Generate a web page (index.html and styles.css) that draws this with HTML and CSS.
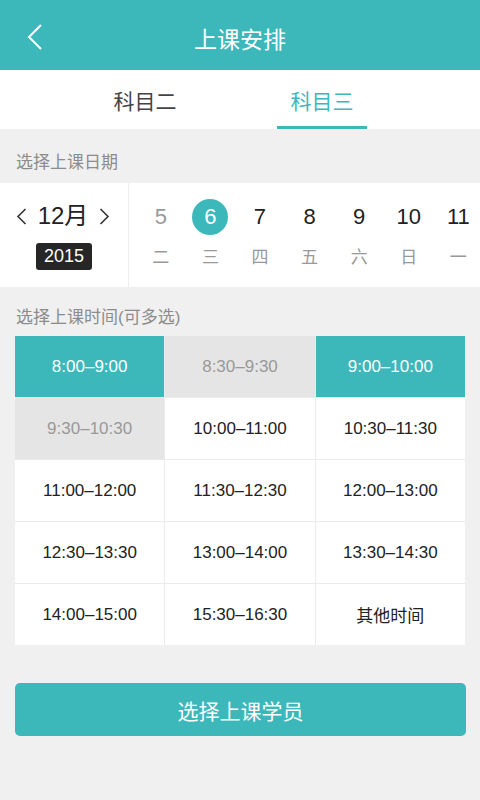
FILE: index.html
```html
<!DOCTYPE html>
<html lang="zh-CN">
<head>
<meta charset="utf-8">
<title>上课安排</title>
<link rel="stylesheet" href="styles.css">
</head>
<body>
<div class="app">
  <header class="topbar">
    <div class="back">
      <svg width="16" height="26" viewBox="0 0 16 26"><polyline points="14,1 2,13 14,25" fill="none" stroke="#fff" stroke-width="2"/></svg>
    </div>
    <div class="title">上课安排</div>
    <div class="spacer"></div>
  </header>

  <nav class="tabs">
    <div class="tab">科目二</div>
    <div class="tab active">科目三</div>
  </nav>

  <div class="label label-date">选择上课日期</div>

  <section class="daterow">
    <div class="monthpane">
      <div class="month">
        <svg width="11" height="17" viewBox="0 0 11 17"><polyline points="9.5,1 2,8.5 9.5,16" fill="none" stroke="#333" stroke-width="1.6"/></svg>
        <span class="month-text">12月</span>
        <svg width="11" height="17" viewBox="0 0 11 17"><polyline points="1.5,1 9,8.5 1.5,16" fill="none" stroke="#333" stroke-width="1.6"/></svg>
      </div>
      <div class="year">2015</div>
    </div>
    <div class="days">
      <div class="day past"><span class="num">5</span><span class="wd">二</span></div>
      <div class="day selected"><span class="num">6</span><span class="wd">三</span></div>
      <div class="day"><span class="num">7</span><span class="wd">四</span></div>
      <div class="day"><span class="num">8</span><span class="wd">五</span></div>
      <div class="day"><span class="num">9</span><span class="wd">六</span></div>
      <div class="day"><span class="num">10</span><span class="wd">日</span></div>
      <div class="day"><span class="num">11</span><span class="wd">一</span></div>
    </div>
  </section>

  <div class="label label-time">选择上课时间(可多选)</div>

  <section class="slots">
    <div class="slot on">8:00–9:00</div>
    <div class="slot off">8:30–9:30</div>
    <div class="slot on">9:00–10:00</div>
    <div class="slot off">9:30–10:30</div>
    <div class="slot">10:00–11:00</div>
    <div class="slot">10:30–11:30</div>
    <div class="slot">11:00–12:00</div>
    <div class="slot">11:30–12:30</div>
    <div class="slot">12:00–13:00</div>
    <div class="slot">12:30–13:30</div>
    <div class="slot">13:00–14:00</div>
    <div class="slot">13:30–14:30</div>
    <div class="slot">14:00–15:00</div>
    <div class="slot">15:30–16:30</div>
    <div class="slot">其他时间</div>
  </section>

  <button class="submit">选择上课学员</button>
</div>
</body>
</html>
```
FILE: styles.css
```css
* { box-sizing: border-box; }
html, body {
  margin: 0;
  padding: 0;
  background: #f0f0f0;
}
body {
  font-family: "Liberation Sans", "Noto Sans CJK SC", sans-serif;
  color: #333;
}
.app {
  width: 480px;
  height: 800px;
  overflow: hidden;
  background: #f0f0f0;
}
.topbar {
  height: 70px;
  background: #3cb8bb;
  display: grid;
  grid-template-columns: 70px 1fr 70px;
  align-items: center;
}
.back {
  padding-left: 27px;
  padding-top: 4px;
  display: flex;
  align-items: center;
}
.title {
  text-align: center;
  color: #fff;
  font-size: 23px;
  line-height: 30px;
  padding-top: 10px;
}
.tabs {
  height: 59px;
  background: #fff;
  display: flex;
  padding-left: 100px;
  gap: 87px;
}
.tab {
  width: 90px;
  display: flex;
  align-items: center;
  justify-content: center;
  font-size: 21px;
  color: #444;
  border-bottom: 3px solid transparent;
  padding-top: 3px;
}
.tab.active {
  color: #3cb8bb;
  border-bottom-color: #3cb8bb;
}
.label {
  display: flex;
  align-items: flex-end;
  padding-left: 16px;
  font-size: 17px;
  line-height: 20px;
  color: #8c8c8c;
}
.label-date {
  height: 54px;
  padding-bottom: 10px;
}
.label-time {
  height: 49px;
  padding-bottom: 8px;
}
.daterow {
  height: 104px;
  background: #fff;
  display: flex;
}
.monthpane {
  width: 129px;
  flex: none;
  border-right: 1px solid #eeeeee;
  display: flex;
  flex-direction: column;
  align-items: center;
  padding-top: 17px;
}
.month {
  height: 32px;
  display: flex;
  align-items: center;
  gap: 6px;
  padding-right: 2px;
}
.month-text {
  font-size: 24px;
  color: #222;
  padding: 0 5px;
  line-height: 32px;
}
.year {
  margin-top: 11px;
  height: 27px;
  width: 56px;
  background: #262626;
  color: #fff;
  border-radius: 3px;
  font-size: 18px;
  line-height: 27px;
  text-align: center;
}
.days {
  flex: 1;
  display: grid;
  grid-template-columns: repeat(7, 49.6px);
  padding-left: 7px;
  padding-top: 18px;
  overflow: hidden;
}
.day {
  display: flex;
  flex-direction: column;
  align-items: center;
}
.num {
  height: 32px;
  width: 36px;
  display: flex;
  align-items: center;
  justify-content: center;
  font-size: 22px;
  color: #222;
}
.day.past .num { color: #999; }
.day.selected .num {
  width: 36px;
  height: 36px;
  margin: -2px 0;
  border-radius: 50%;
  background: #3cb8bb;
  color: #fff;
}
.wd {
  margin-top: 15px;
  font-size: 17px;
  line-height: 20px;
  color: #999;
}
.slots {
  margin: 0 15px;
  display: grid;
  grid-template-columns: repeat(3, 1fr);
  grid-auto-rows: 61px;
  gap: 1px;
  background: #ebebeb;
}
.slot {
  background: #fff;
  display: flex;
  align-items: center;
  justify-content: center;
  font-size: 17px;
  color: #222;
}
.slot.on {
  background: #3cb8bb;
  color: #fff;
}
.slot.off {
  background: #e5e5e5;
  color: #999;
}
.submit {
  display: block;
  margin: 38px 15px 0;
  width: 451px;
  height: 53px;
  border: none;
  border-radius: 5px;
  background: #3cb8bb;
  color: #fff;
  font-family: "Liberation Sans", "Noto Sans CJK SC", sans-serif;
  font-size: 21px;
  padding: 0;
}
```
